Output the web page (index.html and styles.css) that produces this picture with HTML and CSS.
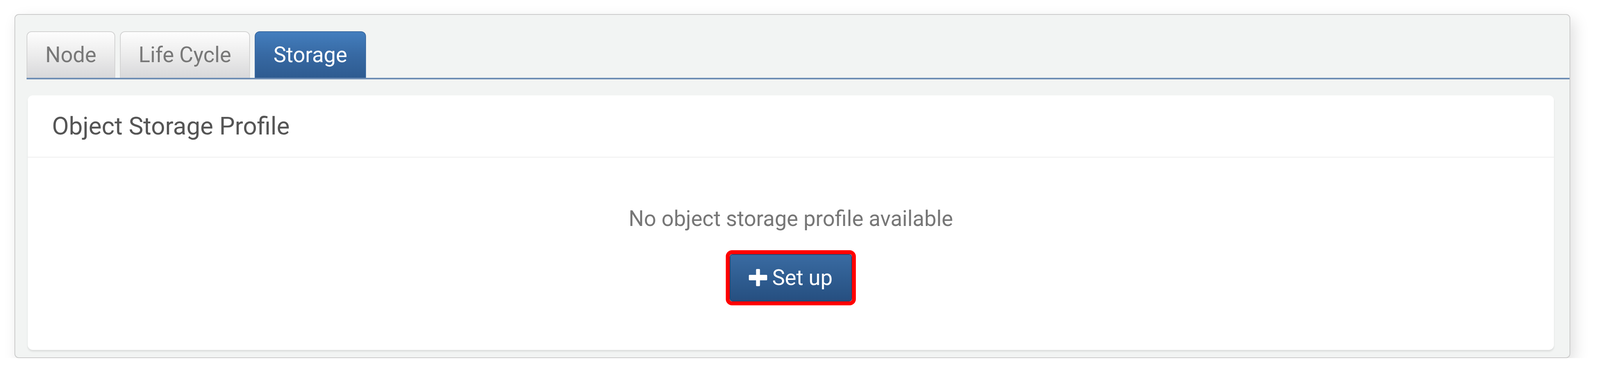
FILE: index.html
```html
<!DOCTYPE html>
<html lang="en">
<head>
<meta charset="utf-8">
<title>Storage</title>
<link rel="stylesheet" href="styles.css">
</head>
<body>
<div class="panel">
  <div class="tabs">
    <div class="tab">Node</div>
    <div class="tab">Life Cycle</div>
    <div class="tab active">Storage</div>
  </div>
  <div class="card">
    <div class="card-header">Object Storage Profile</div>
    <div class="card-body">
      <div class="empty">No object storage profile available</div>
      <span class="highlight">
        <button class="btn" type="button">
          <svg class="plus" viewBox="0 0 47 44" width="47" height="44" aria-hidden="true">
            <path d="M18.5 2a2 2 0 0 1 2-2h6a2 2 0 0 1 2 2v13h16.5a2 2 0 0 1 2 2v10a2 2 0 0 1-2 2H28.5v13a2 2 0 0 1-2 2h-6a2 2 0 0 1-2-2V29H2a2 2 0 0 1-2-2V17a2 2 0 0 1 2-2h16.5z" fill="#fff"/>
          </svg>
          <span>Set up</span>
        </button>
      </span>
    </div>
  </div>
</div>
</body>
</html>
```
FILE: styles.css
```css
html, body {
  margin: 0;
  padding: 0;
  background: #ffffff;
}

body {
  font-family: Roboto, "Liberation Sans", Arial, sans-serif;
  font-size: 55px;
}

.panel {
  margin: 36px 76px 0 37px;
  background: #f2f4f3;
  border: 2px solid #cbcbcb;
  border-radius: 11px;
  box-shadow: 10px 14px 38px rgba(0, 0, 0, 0.13);
  padding: 42px 0 19px 0;
}

.tabs {
  display: flex;
  gap: 12px;
  margin-left: 29px;
  border-bottom: 4px solid #6d8db4;
}

.tab {
  height: 117px;
  display: flex;
  align-items: center;
  padding: 0 46px;
  border: 2px solid #d2d2d2;
  border-bottom: none;
  border-radius: 13px 13px 0 0;
  background: linear-gradient(to bottom, #fdfdfd 0%, #ececec 50%, #d8d8da 100%);
  color: #787878;
  line-height: 1;
}

.tab.active {
  background: linear-gradient(to bottom, #437ebe 0%, #3769a3 50%, #2e5b90 100%);
  border-color: #3a6aa2;
  color: #ffffff;
}

.card {
  margin: 41px 40px 0 32px;
  background: #ffffff;
  border-radius: 13px;
  box-shadow: 0 4px 4px rgba(0, 0, 0, 0.09);
}

.card-header {
  height: 157px;
  display: flex;
  align-items: center;
  padding-left: 62px;
  border-bottom: 2px solid #efefef;
  font-size: 63px;
  color: #555555;
  line-height: 1;
}

.card-body {
  display: flex;
  flex-direction: column;
  align-items: center;
  padding: 118px 0 114px 0;
}

.empty {
  color: #777777;
  line-height: 77px;
  margin-bottom: 42px;
}

.highlight {
  display: inline-block;
  border: 10px solid #ff0000;
  border-radius: 16px;
}

.btn {
  display: flex;
  align-items: center;
  gap: 13px;
  height: 121px;
  padding: 0 48px 0 47px;
  border: 2px solid #234774;
  border-radius: 7px;
  background: linear-gradient(to bottom, #3a6ba2 0%, #2f5d91 50%, #264f80 100%);
  color: #ffffff;
  font-family: Roboto, "Liberation Sans", Arial, sans-serif;
  font-size: 55px;
  line-height: 1;
  cursor: pointer;
}

.plus {
  display: block;
  width: 47px;
  height: 44px;
  margin-top: -2px;
}
```
